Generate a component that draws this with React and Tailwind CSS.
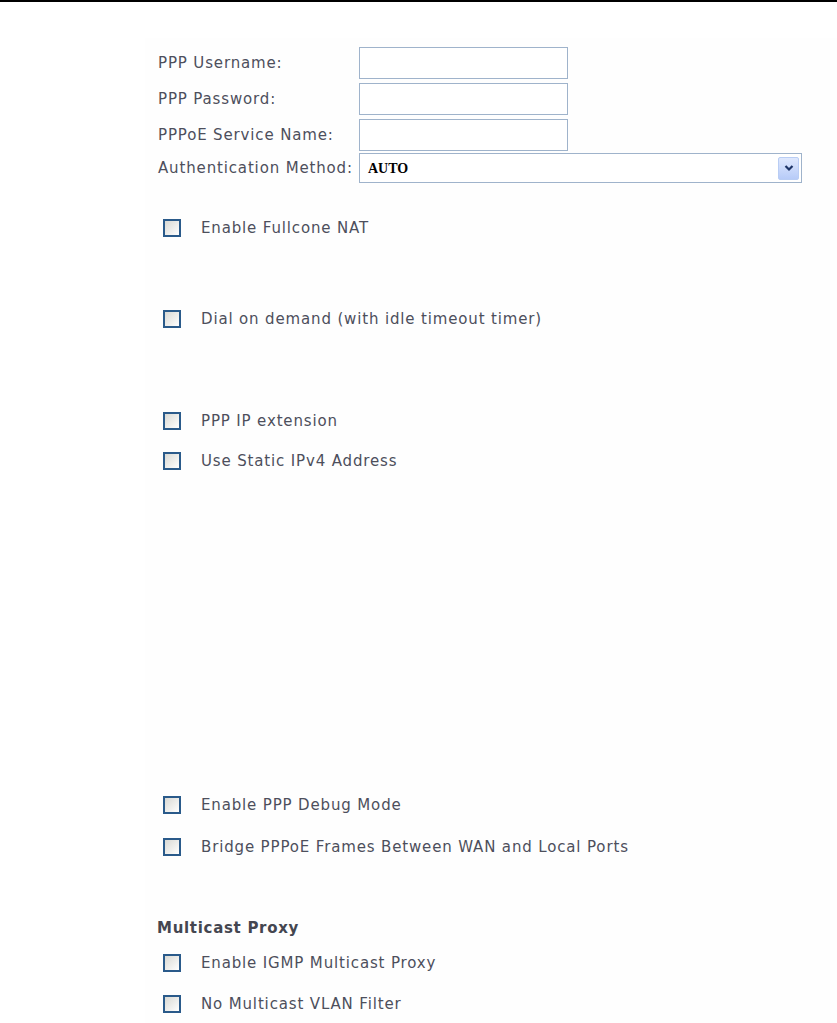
import React from "react";

function Box() {
  return (
    <span className="block w-[18px] h-[18px] border-2 border-[#2a5a8a] bg-gradient-to-br from-[#d9d9d4] to-white flex-shrink-0" />
  );
}

function Check({ label, className = "" }) {
  return (
    <div className={"flex items-center h-[40px] pl-[5px] " + className}>
      <Box />
      <span className="ml-[20px]">{label}</span>
    </div>
  );
}

function Field({ label, children, className = "" }) {
  return (
    <div className={"flex items-center " + className}>
      <span className="w-[201px] flex-shrink-0">{label}</span>
      {children}
    </div>
  );
}

export default function App() {
  return (
    <div
      className="min-h-screen bg-white text-[15px] tracking-[0.85px] text-[#4d4f5c]"
      style={{ fontFamily: "'DejaVu Sans', Verdana, sans-serif" }}
    >
      <div className="h-[2px] bg-black" />
      <div className="ml-[145px] mt-[36px] pl-[13px] bg-[#fefefe] pb-4">
        <div className="flex flex-col pt-[9px]">
          <Field label="PPP Username:">
            <div className="w-[209px] h-[32px] border border-[#9fb3cb] bg-white" />
          </Field>
          <Field label="PPP Password:" className="mt-[4px]">
            <div className="w-[209px] h-[32px] border border-[#9fb3cb] bg-white" />
          </Field>
          <Field label="PPPoE Service Name:" className="mt-[4px]">
            <div className="w-[209px] h-[32px] border border-[#9fb3cb] bg-white" />
          </Field>
          <Field label="Authentication Method:" className="mt-[2px]">
            <div className="w-[443px] h-[30px] border border-[#9fb3cb] bg-white flex items-center justify-between pl-[8px] pr-[2px]">
              <span
                className="text-[14px] tracking-normal text-black font-semibold"
                style={{ fontFamily: "'Liberation Serif', serif" }}
              >
                AUTO
              </span>
              <span className="w-[21px] h-[23px] rounded-[2px] border border-[#b9cdf4] bg-gradient-to-b from-[#dfe8fd] to-[#b7cbf8] flex items-center justify-center">
                <svg viewBox="0 0 10 8" className="w-[10px] h-[8px]">
                  <polyline points="1.5,2 5,5.5 8.5,2" fill="none" stroke="#1e3466" strokeWidth="2.2" />
                </svg>
              </span>
            </div>
          </Field>
        </div>

        <Check label="Enable Fullcone NAT" className="mt-[25px]" />
        <Check label="Dial on demand (with idle timeout timer)" className="mt-[51px]" />
        <Check label="PPP IP extension" className="mt-[62px]" />
        <Check label="Use Static IPv4 Address" />
        <Check label="Enable PPP Debug Mode" className="mt-[304px]" />
        <Check label="Bridge PPPoE Frames Between WAN and Local Ports" className="mt-[2px]" />

        <div className="mt-[51px] h-[20px] flex items-center font-bold tracking-[0.7px] text-[#444650] -ml-[1px]">Multicast Proxy</div>
        <Check label="Enable IGMP Multicast Proxy" className="mt-[5px]" />
        <Check label="No Multicast VLAN Filter" className="mt-[1px]" />
      </div>
    </div>
  );
}
